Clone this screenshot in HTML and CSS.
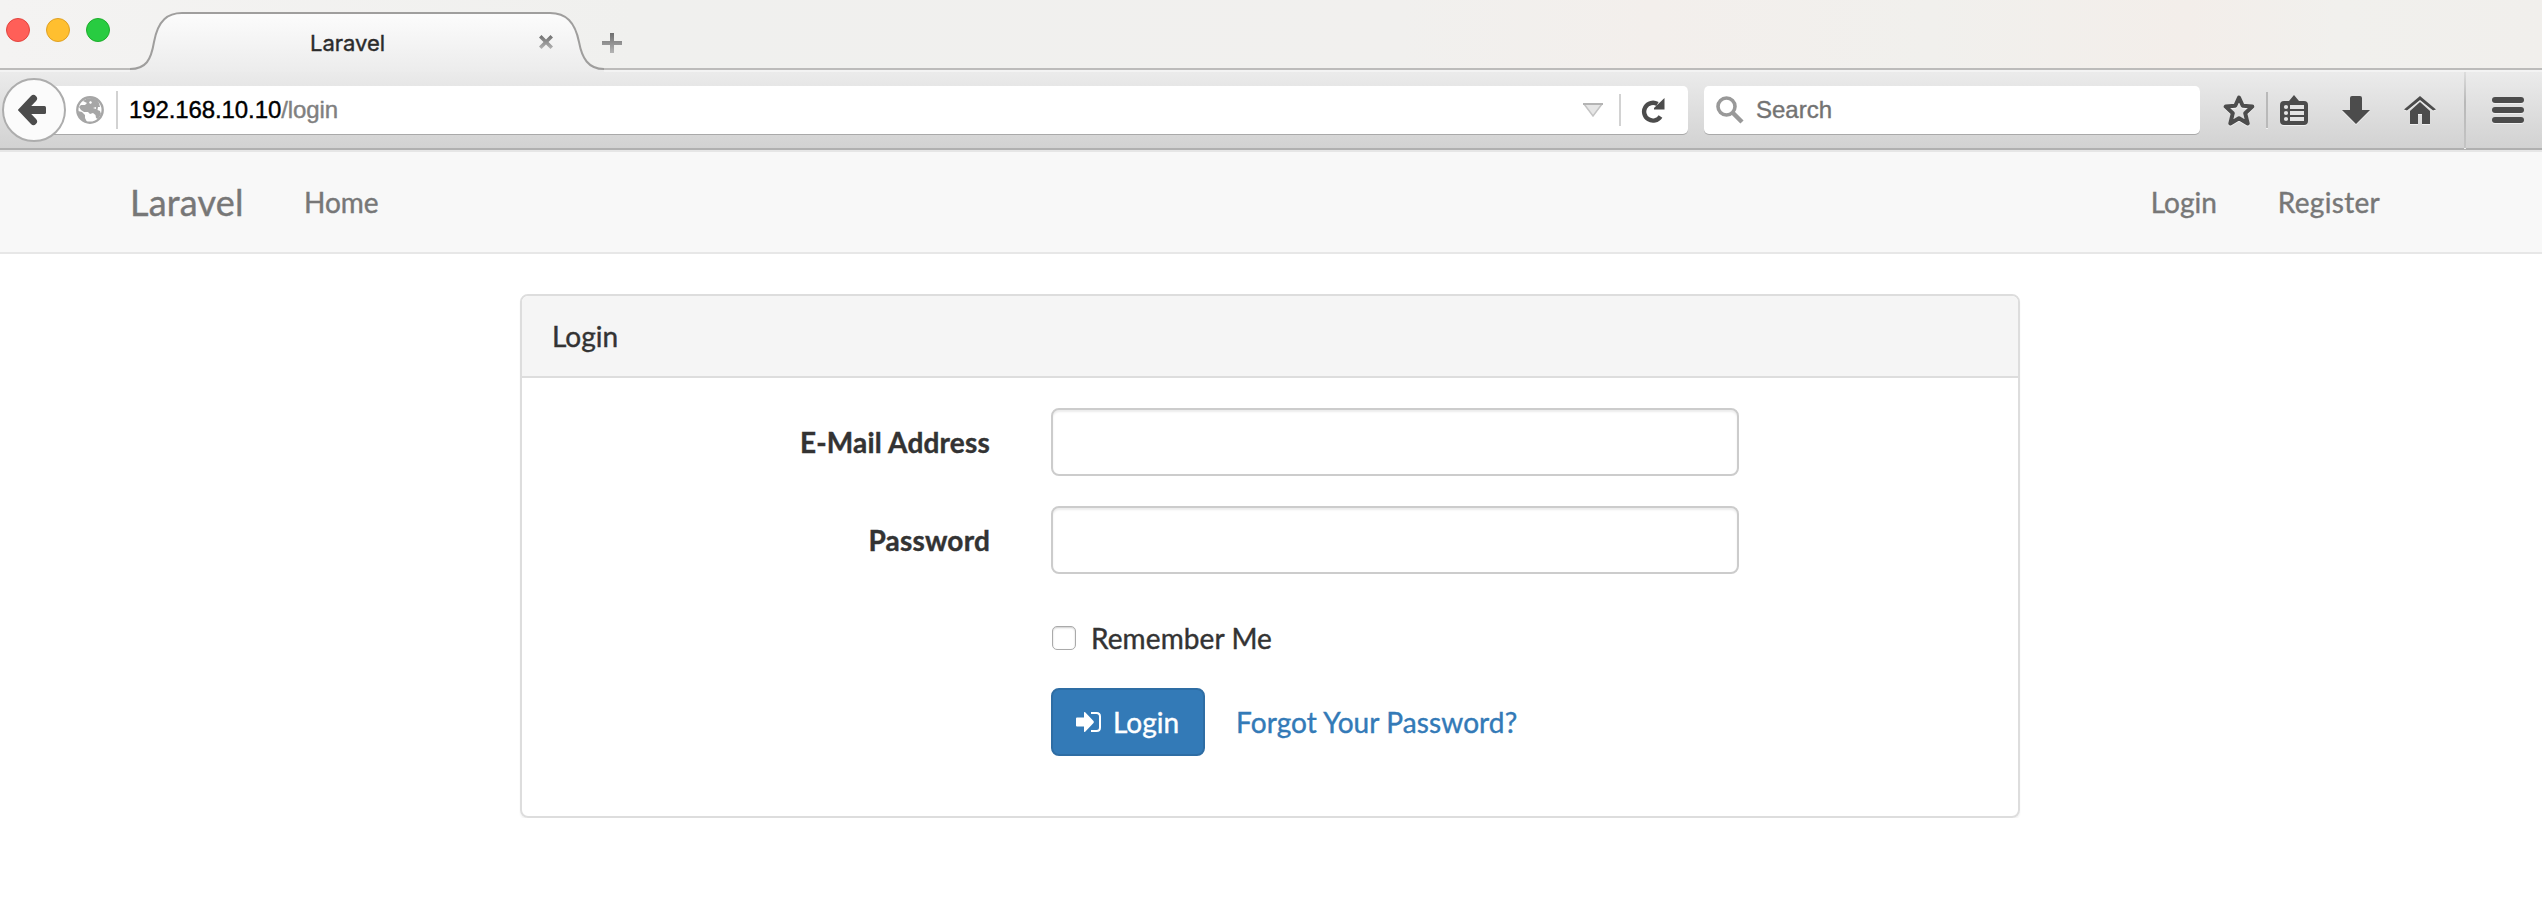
FILE: index.html
```html
<!DOCTYPE html>
<html lang="en">
<head>
<meta charset="utf-8">
<title>Laravel</title>
<link rel="stylesheet" href="styles.css">
</head>
<body>
<header class="browser">
  <div class="tabstrip">
    <svg class="tab-shape" width="2542" height="72" viewBox="0 0 2542 72">
      <defs>
        <linearGradient id="tabfill" x1="0" y1="13" x2="0" y2="72" gradientUnits="userSpaceOnUse"><stop offset="0" stop-color="#fcfcfc"/><stop offset="1" stop-color="#ececec"/></linearGradient>
        <linearGradient id="sign" x1="0" y1="0" x2="0" y2="1"><stop offset="0" stop-color="#6e6e6e"/><stop offset="1" stop-color="#b4b4b4"/></linearGradient>
      </defs>
      <path d="M0 71H130M604 71H2542" stroke="#f3f3f3" stroke-width="2"/>
      <path d="M130 72V69C146 69 151 60 154 42C158 20 168 13 182 13H550C566 13 575 22 579 42C582 58 588 69 604 69V72Z" fill="url(#tabfill)"/>
      <path d="M0 69H130M604 69H2542" stroke="#bcbbba" stroke-width="2"/>
      <path d="M130 69C146 69 151 60 154 42C158 20 168 13 182 13H550C566 13 575 22 579 42C582 58 588 69 604 69" fill="none" stroke="#9f9e9d" stroke-width="2"/>
    </svg>
    <div class="lights"><i class="light red"></i><i class="light yellow"></i><i class="light green"></i></div>
    <span class="tab-title">Laravel</span>
    <svg class="tab-close" width="16" height="16" viewBox="0 0 16 16"><path d="M3.500 1 8 5.500 12.500 1 15 3.500 10.500 8 15 12.500 12.500 15 8 10.500 3.500 15 1 12.500 5.500 8 1 3.500Z" fill="url(#sign)"/></svg>
    <svg class="tab-new" width="20" height="20" viewBox="0 0 20 20"><path d="M8 0H12V8H20V12H12V20H8V12H0V8H8Z" fill="url(#sign)"/></svg>
  </div>
  <div class="toolbar">
    <div class="back"><svg width="30" height="32" viewBox="0 0 30 32"><path d="M15.500 4.500 4.500 16 15.500 27.500" fill="none" stroke="#4c4c4c" stroke-width="7" stroke-linecap="round"/><path d="M5 16H24" stroke="#4c4c4c" stroke-width="8"/><rect x="20" y="12" width="8" height="8" rx="1.500" fill="#4c4c4c"/></svg></div>
    <div class="urlbar">
      <svg class="globe" width="28" height="28" viewBox="0 0 28 28">
        <circle cx="14" cy="14" r="12.700" fill="#fff" stroke="#a6a6a6" stroke-width="2.400"/>
        <path d="M7 5 11 2.500 16 2 21 4 23 7 24 11 22 11 21.500 14 24 15 25 18 22 23 20 22 19.500 19 17 17 14 18 12 16 8 16 5 14 3 11 5 9 9 9 11 7 9 6ZM2 15 6 16 9 19 9 22 11 26 6 24 3 20Z" fill="#a6a6a6"/>
        <path d="M13 6 15 5 16 7 14 8ZM17 12 20 11 20 13Z" fill="#fff"/>
      </svg>
      <i class="rule short"></i>
      <span class="url"><b>192.168.10.10</b>/login</span>
      <svg class="drop" width="20" height="14" viewBox="0 0 20 14"><path d="M1 1H19L10 13Z" fill="#e6e6e6" stroke="#c4c4c4" stroke-width="1.500"/><path d="M0 1H20" stroke="#b4b4b4" stroke-width="2"/></svg>
      <i class="rule mid"></i>
      <svg class="reload" width="24" height="26" viewBox="0 0 24 26"><path d="M19.500 19.500A8.900 8.900 0 1 1 16.500 7" fill="none" stroke="#4c4c4c" stroke-width="4.400"/><path d="M23.500 1V12.500H13V11Z" fill="#4c4c4c"/></svg>
    </div>
    <div class="search">
      <svg width="28" height="28" viewBox="0 0 28 28"><circle cx="10.500" cy="10.500" r="8.500" fill="none" stroke="#999" stroke-width="3.600"/><path d="M16 16 26 26" stroke="#999" stroke-width="4.500"/></svg>
      <span>Search</span>
    </div>
    <div class="tools">
      <svg class="star" width="32" height="32" viewBox="0 0 32 32"><path d="M16 3.500 19.700 11.700 29.300 12.600 22.200 19.200 24.700 29.500 16 24.300 7.300 29.500 9.800 19.200 2.700 12.600 12.300 11.700Z" fill="none" stroke="#4c4c4c" stroke-width="4" stroke-linejoin="round"/></svg>
      <i class="rule tool-rule"></i>
      <svg class="list" width="28" height="30" viewBox="0 0 28 30"><path d="M9 6 14 0 19 6H24Q28 6 28 10V26Q28 30 24 30H4Q0 30 0 26V10Q0 6 4 6Z" fill="#4c4c4c"/><path d="M10 10H24V14H10ZM10 16H24V20H10ZM10 22H24V26H10Z" fill="#e4e4e4"/><circle cx="6" cy="12" r="2.100" fill="#e4e4e4"/><circle cx="6" cy="18" r="2.100" fill="#e4e4e4"/><circle cx="6" cy="24" r="2.100" fill="#e4e4e4"/></svg>
      <svg class="down" width="28" height="28" viewBox="0 0 28 28"><path d="M10 0H18Q20 0 20 2V14H28L14 28 0 14H8V2Q8 0 10 0Z" fill="#4c4c4c"/></svg>
      <svg class="home" width="32" height="28" viewBox="0 0 32 28"><path d="M0 13.500 16 0 32 13.500 29 14.500 16 4 3 14.500Z M6 15 16 6 26 15V28H18V18H14V28H6Z" fill="#4c4c4c"/></svg>
      <i class="menu-rule"></i>
      <svg class="menu" width="32" height="26" viewBox="0 0 32 26" fill="#4c4c4c"><rect width="32" height="6" rx="3"/><rect y="10" width="32" height="6" rx="3"/><rect y="20" width="32" height="6" rx="3"/></svg>
    </div>
  </div>
</header>
<nav class="navbar">
  <a class="brand">Laravel</a><a class="nav-home">Home</a>
  <a class="nav-login">Login</a><a class="nav-register">Register</a>
</nav>
<main class="panel">
  <div class="panel-heading">Login</div>
  <form class="panel-body">
    <label class="label">E-Mail Address</label><input class="field" type="text">
    <label class="label">Password</label><input class="field" type="password">
    <label class="remember"><i class="check"></i><span>Remember Me</span></label>
    <div class="actions">
      <button class="submit" type="button"><svg width="26" height="22" viewBox="0 0 26 22"><path d="M0 7.500Q0 6.500 1 6.500H8V1.800Q8 .5 9.200 1.300L17.500 10Q18.300 11 17.500 12L9.200 20.700Q8 21.500 8 20.200V15.500H1Q0 15.500 0 14.500Z" fill="#fff"/><path d="M15 2H20.500Q24 2 24 5.500V16.500Q24 20 20.500 20H15" fill="none" stroke="#fff" stroke-width="2"/></svg><span>Login</span></button>
      <a class="forgot">Forgot Your Password?</a>
    </div>
  </form>
</main>
</body>
</html>
```
FILE: styles.css
```css
* { box-sizing: border-box; }
body { margin: 0; background: #fff; color: #333; font: 28px/40px Lato, sans-serif; -webkit-text-stroke: .4px; }
svg { display: block; flex: none; }
.browser { height: 152px; border-bottom: 2px solid #e6e6e6; font-family: "Liberation Sans", sans-serif; }
.tabstrip { position: relative; height: 72px; display: flex; align-items: flex-start; background: linear-gradient(90deg, #f4f3f2, #f0f0ee 25%, #f1f0ee 55%, #f3efec 65%, #f1f0ed 76%, #f3eeea 86%, #f1f0ed 92%, #f1efec); }
.tab-shape { position: absolute; left: 0; top: 0; }
.lights { position: relative; display: flex; gap: 16px; padding: 18px 0 0 6px; width: 310px; }
.light { width: 24px; height: 24px; border-radius: 50%; border: 1px solid; }
.red { background: #ff5f58; border-color: #e2443e; }
.yellow { background: #ffbf2f; border-color: #dfa023; }
.green { background: #28cc41; border-color: #1dad2b; }
.tab-title { position: relative; width: 228px; padding-top: 23px; font: 22px/40px Inter, sans-serif; color: #2b2b2b; }
.tab-close { position: relative; margin-top: 34px; }
.tab-new { position: relative; margin: 33px 0 0 48px; }
.toolbar { height: 78px; display: flex; align-items: flex-start; background: linear-gradient(#ebebeb, #d2d2d2); border-bottom: 2px solid #b0b0b0; }
.back { position: relative; z-index: 1; display: flex; align-items: center; justify-content: center; width: 64px; height: 64px; margin: 6px -34px 0 2px; padding-right: 2px; border: 2px solid #adadad; border-radius: 50%; background: #fbfbfb; }
.urlbar, .search { display: flex; align-items: center; height: 48px; margin-top: 14px; background: #fff; border-radius: 5px; box-shadow: 0 1px 0 #a9a9a9; font-size: 24px; color: #808080; }
.urlbar { width: 1656px; padding-left: 44px; }
.rule { width: 2px; background: #d2d2d2; }
.short { height: 38px; margin: 0 11px 0 12px; }
.mid { height: 32px; margin: 0 20px 0 17px; }
.url { flex: 1; letter-spacing: -.1px; }
.url b { font-weight: 400; color: #000; }
.reload { margin-right: 23px; }
.drop { margin-right: -1px; }
.search { width: 496px; margin-left: 16px; padding-left: 12px; gap: 12px; color: #737373; }
.tools { display: flex; align-items: center; height: 76px; margin-left: 23px; filter: drop-shadow(0 1px 0 #f0f0f0); }
.tool-rule { height: 36px; margin: 0 12px 0 11px; background: #b9b9b9; }
.down { margin-left: 34px; }
.home { margin-left: 34px; }
.menu-rule { width: 2px; height: 76px; margin: 0 26px 0 28px; background: linear-gradient(#ddd, #b8b8b8 40%, #c4c4c4); }
.navbar { display: flex; align-items: center; height: 102px; padding: 0 162px 0 130px; background: #f8f8f8; border-bottom: 2px solid #e7e7e7; color: #777; }
.brand { font-size: 36px; width: 174px; letter-spacing: .2px; }
.nav-home { flex: 1; }
.nav-login { margin-right: 61px; }
.nav-register { letter-spacing: .3px; }
.panel { width: 1500px; height: 524px; margin: 40px 0 0 520px; border: 2px solid #ddd; border-radius: 8px; box-shadow: 0 2px 2px rgba(0,0,0,.05); }
.panel-heading { height: 82px; padding: 20px 30px; background: #f5f5f5; border-bottom: 2px solid #ddd; border-radius: 6px 6px 0 0; }
.panel-body { display: grid; grid-template-columns: 469px 688px; column-gap: 60px; grid-template-rows: 68px 68px 54px 68px; row-gap: 30px; padding-top: 30px; }
.label { padding: 14px 1px 0 0; text-align: right; font-weight: 700; letter-spacing: .2px; }
.field { width: 688px; height: 68px; border: 2px solid #ccc; border-radius: 8px; background: #fff; box-shadow: inset 0 2px 2px rgba(0,0,0,.075); }
.remember, .actions { grid-column: 2; display: flex; align-items: center; }
.remember { padding-top: 14px; letter-spacing: .1px; }
.check { width: 24px; height: 24px; margin: 0 15px 0 1px; border: 1px solid #aaa; border-radius: 5px; box-shadow: inset 0 1px 2px rgba(0,0,0,.2); }
.submit { display: flex; align-items: center; gap: 11px; width: 154px; height: 68px; padding: 0 0 0 23px; border: 2px solid #2e6da4; border-radius: 8px; background: #337ab7; color: #fff; font: inherit; }
.forgot { margin-left: 31px; color: #337ab7; letter-spacing: .1px; }
```
